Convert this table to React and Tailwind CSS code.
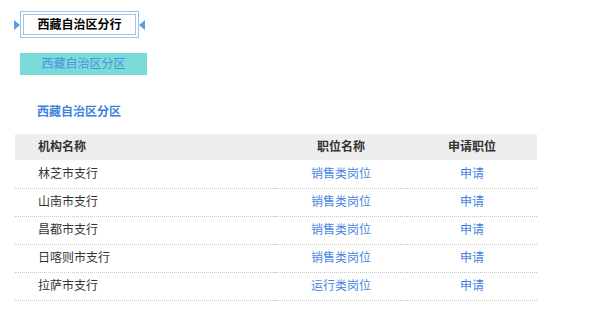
import React from 'react';

const rows = [
  { org: '林芝市支行', job: '销售类岗位' },
  { org: '山南市支行', job: '销售类岗位' },
  { org: '昌都市支行', job: '销售类岗位' },
  { org: '日喀则市支行', job: '销售类岗位' },
  { org: '拉萨市支行', job: '运行类岗位' },
];

const App = () => {
  return (
    <div
      className="w-[591px] h-[329px] bg-white text-[#333] overflow-hidden"
      style={{ fontFamily: '"Liberation Sans", "Noto Sans CJK SC", sans-serif' }}
    >
      <div className="pt-[11px] pl-[14px] flex items-center">
        <div className="w-0 h-0 border-y-[5px] border-y-transparent border-l-[6px] border-l-[#5b9be6]" />
        <div className="w-[119px] h-[27px] border border-[#9cc3f0] p-[2px]">
          <div className="w-full h-full border border-[#9cc3f0] flex items-center justify-center text-[12px] font-bold text-black">
            西藏自治区分行
          </div>
        </div>
        <div className="w-0 h-0 border-y-[5px] border-y-transparent border-r-[6px] border-r-[#5b9be6]" />
      </div>

      <div className="mt-[15px] ml-[20px] w-[127px] h-[22px] bg-[#7adcd9] flex items-center justify-center text-[12px] text-[#4f8ee3]">
        西藏自治区分区
      </div>

      <div className="mt-[29px] ml-[37px] text-[12px] font-bold text-[#3f7fe0] leading-[16px]">
        西藏自治区分区
      </div>

      <table className="mt-[14px] ml-[15px] w-[522px] border-collapse text-[12px]">
        <thead>
          <tr className="bg-[#eeeeee] h-[26px]">
            <th className="w-[260px] text-left pl-[23px] font-bold">机构名称</th>
            <th className="w-[132px] text-center font-bold">职位名称</th>
            <th className="text-center font-bold">申请职位</th>
          </tr>
        </thead>
        <tbody>
          {rows.map((r) => (
            <tr key={r.org} className="h-[28px] border-b border-dotted border-[#c8c8c8]">
              <td className="pl-[23px]">{r.org}</td>
              <td className="text-center text-[#4a86e0]">{r.job}</td>
              <td className="text-center text-[#3f7fe0]">申请</td>
            </tr>
          ))}
        </tbody>
      </table>
    </div>
  );
};

export default App;
